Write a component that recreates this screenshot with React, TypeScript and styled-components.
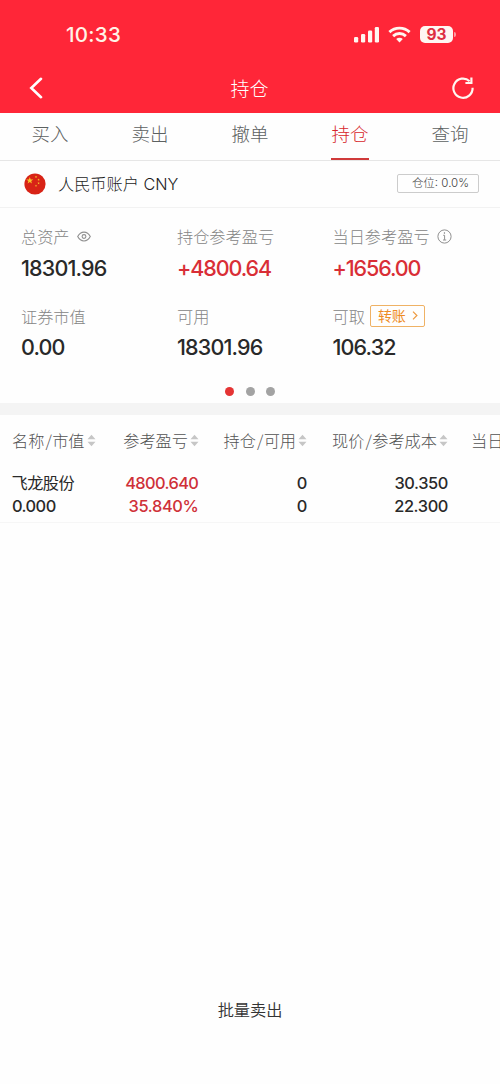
import React from "react";
import styled, { createGlobalStyle } from "styled-components";

const Global = createGlobalStyle`
  * { box-sizing: border-box; }
  body { margin: 0; background: #fefefe; overflow: hidden; }
`;

const Screen = styled.div`
  width: 500px;
  height: 1084px;
  display: flex;
  flex-direction: column;
  overflow: hidden;
  background: #fefefe;
  color: #2b2b2b;
  font-family: Inter, "Noto Sans CJK SC", sans-serif;
  white-space: nowrap;
  svg { display: block; flex: none; }
`;

const Header = styled.header`
  height: 113px;
  flex: none;
  background: #ff2638;
  color: #fff;
`;

const StatusBar = styled.div`
  height: 63px;
  padding: 5px 44px 0 66px;
  display: flex;
  align-items: center;
  justify-content: space-between;
`;

const Clock = styled.span`
  font-size: 20.5px;
  font-weight: 550;
  letter-spacing: 0.3px;
  color: #fff3e6;
`;

const StatusIcons = styled.div`
  display: flex;
  align-items: center;
  gap: 9px;
`;

const Battery = styled.div`
  display: flex;
  align-items: center;
  gap: 1px;
  &::after {
    content: "";
    width: 2px;
    height: 5px;
    border-radius: 0 2px 2px 0;
    background: #ff9aa0;
  }
`;

const BatteryLevel = styled.span`
  width: 33px;
  height: 17px;
  border-radius: 5px;
  background: #fff6f2;
  color: #dd2f42;
  font-size: 15.5px;
  font-weight: 700;
  line-height: 17px;
  text-align: center;
`;

const NavBar = styled.div`
  height: 50px;
  padding: 0 25px 0 28px;
  display: grid;
  grid-template-columns: 1fr auto 1fr;
  align-items: center;
  svg:last-child { justify-self: end; }
`;

const Title = styled.h1`
  margin: 3px 4px 0 0;
  font-size: 19px;
  font-weight: 300;
  line-height: 28px;
`;

const Tabs = styled.nav`
  height: 48px;
  flex: none;
  display: grid;
  grid-template-columns: repeat(5, 1fr);
  justify-items: center;
  border-bottom: 1px solid #e6e6e6;
`;

const Tab = styled.span<{ $active?: boolean }>`
  height: 47px;
  line-height: 43px;
  font-size: 18.5px;
  font-weight: 300;
  color: ${(p) => (p.$active ? "#d7262b" : "#5c6161")};
  border-bottom: 2px solid ${(p) => (p.$active ? "#d03a3a" : "transparent")};
`;

const AccountRow = styled.div`
  height: 47px;
  flex: none;
  padding: 0 21px 1px 24px;
  display: flex;
  align-items: center;
  border-bottom: 1px solid #f2f2f2;
`;

const AccountName = styled.span`
  margin: -1px 0 0 12px;
  flex: 1;
  font-size: 16.2px;
  font-weight: 300;
  color: #1c1c1c;
`;

const PositionTag = styled.span`
  width: 82px;
  height: 19px;
  padding-right: 9px;
  border: 1px solid #ccc;
  border-radius: 2px;
  font-size: 11.5px;
  font-weight: 300;
  line-height: 17px;
  text-align: right;
  color: #444;
`;

const Summary = styled.section`
  height: 195px;
  flex: none;
  padding: 16px 0 0 21px;
  display: flex;
  flex-direction: column;
`;

const Metrics = styled.div`
  display: grid;
  grid-template-columns: 156px 155.5px 156px;
  grid-auto-rows: 79.5px;
`;

const Label = styled.div`
  height: 24px;
  display: flex;
  align-items: center;
  font-size: 16.2px;
  font-weight: 300;
  color: #858585;
`;

const Value = styled.div<{ $up?: boolean }>`
  margin-top: 5.5px;
  font-size: 21.5px;
  line-height: 28px;
  font-weight: 450;
  letter-spacing: ${(p) => (p.$up ? "-1.1px" : "-0.85px")};
  color: ${(p) => (p.$up ? "#d92e36" : "#292929")};
`;

const Transfer = styled.span`
  width: 55px;
  height: 22px;
  margin-left: 5px;
  padding-left: 7px;
  display: flex;
  align-items: center;
  gap: 6px;
  border: 1px solid #efb265;
  border-radius: 2px;
  font-size: 14px;
  line-height: 18px;
  font-weight: 400;
  color: #ee8b24;
`;

const Pager = styled.div`
  display: flex;
  gap: 11.5px;
  margin: 4px 0 0 204px;
`;

const Dot = styled.i<{ $on?: boolean }>`
  width: 9px;
  height: 9px;
  border-radius: 50%;
  background: ${(p) => (p.$on ? "#e53434" : "#a3a3a3")};
`;

const Divider = styled.div`
  height: 12px;
  flex: none;
  background: #f4f4f4;
`;

const columns = "88px 99px 108px 141px 80px";

const TableHead = styled.div`
  height: 52px;
  flex: none;
  padding: 0 0 2px 12px;
  display: grid;
  grid-template-columns: ${columns};
  align-items: center;
  font-family: "Noto Sans CJK SC", sans-serif;
  font-size: 16.2px;
  line-height: 24px;
  font-weight: 300;
  color: #525252;
`;

const HeadCell = styled.span<{ $start?: boolean }>`
  display: flex;
  align-items: center;
  gap: 2px;
  justify-content: ${(p) => (p.$start ? "flex-start" : "flex-end")};
`;

const Slash = styled.span`
  margin: 0 0.3px 0 1.1px;
`;

const ClippedHead = styled(HeadCell)`
  padding-left: 23px;
`;

const TableRow = styled.div`
  height: 56px;
  flex: none;
  padding: 5px 0 0 12px;
  display: grid;
  grid-template-columns: ${columns};
  border-bottom: 1px solid #f6f6f6;
`;

const Cell = styled.div<{ $start?: boolean; $up?: boolean }>`
  font-size: 16.4px;
  font-weight: 450;
  letter-spacing: ${(p) => (p.$start ? "-0.55px" : "-0.4px")};
  line-height: 23px;
  text-align: ${(p) => (p.$start ? "left" : "right")};
  padding-right: ${(p) => (p.$up ? "0.7px" : "0")};
  color: ${(p) => (p.$up ? "#cf3038" : "#292929")};
  div { height: 23px; }
  div:first-child { letter-spacing: ${(p) => (p.$up ? "-0.6px" : "inherit")}; }
`;

const StockName = styled.div`
  margin-left: -0.5px;
  font-size: 16.2px;
  font-weight: 400;
  && { letter-spacing: 0; }
`;

const BatchSell = styled.footer`
  margin-top: auto;
  height: 98px;
  padding-top: 12px;
  text-align: center;
  font-size: 16.2px;
  font-weight: 350;
  line-height: 24px;
  color: #333;
`;

const Sort = () => (
  <svg width="9" height="13" viewBox="0 0 9 13" fill="#c6c6c6">
    <path d="M4.5 .8 8.5 5.2H.5zM4.5 12.2 8.5 7.8H.5z" />
  </svg>
);

const star = "M0-1 .24-.32.95-.31.38.12.59.81 0 .4-.59.81-.38.12-.95-.31-.24-.32z";

const Flag = () => (
  <svg width="22" height="22" viewBox="0 0 22 22">
    <circle cx="11" cy="11" r="10.6" fill="#d82316" />
    <g fill="#f8c62b">
      <path d={star} transform="translate(5.8 7.6) scale(3.7)" />
      <path d={star} transform="translate(12 4) scale(1.3)" />
      <path d={star} transform="translate(14.6 6.7) scale(1.3)" />
      <path d={star} transform="translate(14.6 10.2) scale(1.3)" />
      <path d={star} transform="translate(12 12.8) scale(1.3)" />
    </g>
  </svg>
);

const Signal = () => (
  <svg width="26" height="17" viewBox="0 0 26 17" fill="#fff6f0">
    <rect x="1" y="11" width="4.2" height="5.5" rx="1.2" />
    <rect x="8" y="8" width="4.2" height="8.5" rx="1.2" />
    <rect x="15" y="4.5" width="4.2" height="12" rx="1.2" />
    <rect x="21.8" y="1" width="4.2" height="15.5" rx="1.2" />
  </svg>
);

const Wifi = () => (
  <svg width="23" height="17" viewBox="0 0 23 17" fill="none" stroke="#fff6f0" strokeWidth="2.9">
    <path d="M1.4 6.1C7 .8 16 .8 21.6 6.1" />
    <path d="M5.1 10.1c3.7-3.4 9.1-3.4 12.8 0" />
    <path d="M11.5 16.4 8.2 13c1.9-1.7 4.7-1.7 6.6 0z" fill="#fff6f0" stroke="none" />
  </svg>
);

const Back = () => (
  <svg width="17" height="22" viewBox="0 0 17 22" fill="none" stroke="#fff" strokeWidth="2.6" strokeLinecap="round">
    <path d="M13 1.8 3.3 11l9.7 9.2" />
  </svg>
);

const Refresh = () => (
  <svg width="24" height="24" viewBox="0 0 24 24" fill="none" stroke="#fff6f0" strokeWidth="2.2">
    <path d="M21.6 11.8A9.6 9.6 0 1 1 18.6 5.2" />
    <path d="M20.4 1.4v5.6h-6" />
  </svg>
);

const Eye = () => (
  <svg width="14" height="11" viewBox="0 0 14 11" fill="none" stroke="#909090" strokeWidth="1.1" style={{ marginLeft: 7 }}>
    <path d="M.7 5.5C3.8-.4 10.2-.4 13.3 5.5 10.2 11.4 3.8 11.4.7 5.5z" />
    <circle cx="7" cy="5.5" r="1.9" />
  </svg>
);

const Info = () => (
  <svg width="15" height="15" viewBox="0 0 15 15" fill="none" stroke="#909090" strokeWidth="1" style={{ marginLeft: 7 }}>
    <circle cx="7.5" cy="7.5" r="6.6" />
    <path d="M6.2 6.3h1.4v4.6M6 11h3.2" />
    <circle cx="7.4" cy="4" r=".4" fill="#909090" />
  </svg>
);

const Chevron = () => (
  <svg width="6" height="9" viewBox="0 0 6 9" fill="none" stroke="#ee9a40" strokeWidth="1.2">
    <path d="m1 .6 3.9 3.9L1 8.4" />
  </svg>
);

const tabs = ["买入", "卖出", "撤单", "持仓", "查询"];

const metrics = [
  { label: "总资产", value: "18301.96", extra: <Eye /> },
  { label: "持仓参考盈亏", value: "+4800.64", up: true },
  { label: "当日参考盈亏", value: "+1656.00", up: true, extra: <Info /> },
  { label: "证券市值", value: "0.00" },
  { label: "可用", value: "18301.96" },
  { label: "可取", value: "106.32", extra: <Transfer>转账<Chevron /></Transfer> },
];

export default function App() {
  return (
    <Screen>
      <Global />
      <Header>
        <StatusBar>
          <Clock>10:33</Clock>
          <StatusIcons>
            <Signal />
            <Wifi />
            <Battery><BatteryLevel>93</BatteryLevel></Battery>
          </StatusIcons>
        </StatusBar>
        <NavBar>
          <Back />
          <Title>持仓</Title>
          <Refresh />
        </NavBar>
      </Header>
      <Tabs>
        {tabs.map((t) => <Tab key={t} $active={t === "持仓"}>{t}</Tab>)}
      </Tabs>
      <AccountRow>
        <Flag />
        <AccountName>人民币账户 CNY</AccountName>
        <PositionTag>仓位: 0.0%</PositionTag>
      </AccountRow>
      <Summary>
        <Metrics>
          {metrics.map((m) => (
            <div key={m.label}>
              <Label>{m.label}{m.extra}</Label>
              <Value $up={m.up}>{m.value}</Value>
            </div>
          ))}
        </Metrics>
        <Pager><Dot $on /><Dot /><Dot /></Pager>
      </Summary>
      <Divider />
      <TableHead>
        <HeadCell $start><span>名称<Slash>/</Slash>市值</span><Sort /></HeadCell>
        <HeadCell>参考盈亏<Sort /></HeadCell>
        <HeadCell><span>持仓<Slash>/</Slash>可用</span><Sort /></HeadCell>
        <HeadCell><span>现价<Slash>/</Slash>参考成本</span><Sort /></HeadCell>
        <ClippedHead $start>当日盈亏</ClippedHead>
      </TableHead>
      <TableRow>
        <Cell $start><StockName>飞龙股份</StockName><div>0.000</div></Cell>
        <Cell $up><div>4800.640</div><div>35.840%</div></Cell>
        <Cell><div>0</div><div>0</div></Cell>
        <Cell><div>30.350</div><div>22.300</div></Cell>
      </TableRow>
      <BatchSell>批量卖出</BatchSell>
    </Screen>
  );
}
